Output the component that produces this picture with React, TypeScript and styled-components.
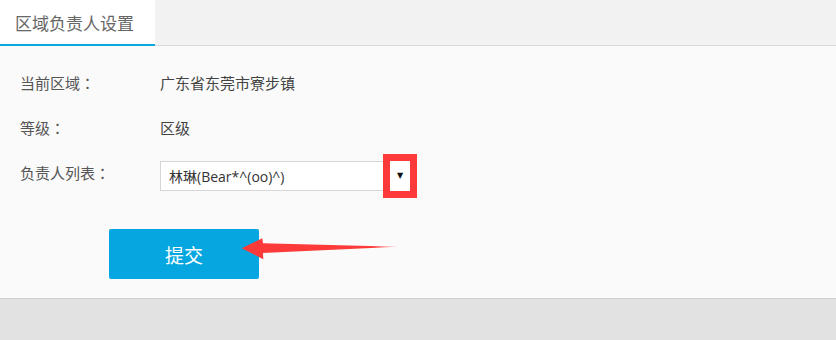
import React from 'react';
import styled, { createGlobalStyle } from 'styled-components';

const GlobalStyle = createGlobalStyle`
  html, body {
    margin: 0;
    padding: 0;
    background: #e2e2e2;
    font-family: 'Noto Sans CJK SC', 'Open Sans', sans-serif;
  }
`;

const Panel = styled.div`
  position: relative;
  background: #fafafa;
  border-bottom: 1px solid #cfcfcf;
  box-shadow: 0 2px 5px rgba(0, 0, 0, 0.25);
`;

const TabBar = styled.div`
  display: flex;
  align-items: flex-start;
  height: 45px;
  background: #f2f2f2;
  border-bottom: 1px solid #d8d8d8;
`;

const Tab = styled.div<{ active?: boolean }>`
  box-sizing: border-box;
  width: 155px;
  height: 46px;
  margin-bottom: -1px;
  padding-left: 15px;
  display: flex;
  align-items: center;
  font-size: 17px;
  color: #666;
  background: ${({ active }) => (active ? '#fff' : 'transparent')};
  border-bottom: 2px solid ${({ active }) => (active ? '#0aa6de' : 'transparent')};
`;

const Form = styled.div`
  padding: 14px 0 19px 20px;
`;

const Row = styled.div`
  display: flex;
  align-items: center;
  height: 45px;
  font-size: 15px;
`;

const Label = styled.div`
  width: 140px;
  color: #555;
`;

const Colon = styled.span`
  font-family: 'Noto Sans CJK TC', sans-serif;
`;

const Value = styled.div`
  color: #444;
`;

const Select = styled.div`
  box-sizing: border-box;
  display: flex;
  align-items: center;
  width: 250px;
  height: 30px;
  margin-top: 6px;
  border: 1px solid #d6d6d6;
  background: #fff;
`;

const SelectText = styled.div`
  flex: 1;
  padding-left: 8px;
  font-family: 'Open Sans', 'Noto Sans CJK SC', sans-serif;
  font-size: 14px;
  color: #333;
`;

const SelectArrow = styled.div`
  width: 20px;
  height: 30px;
  margin-right: -1px;
  display: flex;
  align-items: center;
  justify-content: center;
  font-family: 'DejaVu Sans', sans-serif;
  font-size: 8px;
  color: #111;
  background: #fff;
  outline: 7px solid #fd3a3a;
`;

const ButtonRow = styled.div`
  position: relative;
  margin-top: 34px;
  padding-left: 89px;
`;

const SubmitButton = styled.button`
  width: 150px;
  height: 50px;
  border: none;
  border-radius: 2px;
  background: #06a7e0;
  color: #fff;
  font-family: 'Noto Sans CJK SC', sans-serif;
  font-size: 19px;
  cursor: pointer;
`;

const Pointer = styled.svg`
  position: absolute;
  left: 221px;
  top: 7px;
`;

const FieldLabel: React.FC<{ text: string }> = ({ text }) => (
  <Label>
    {text}
    <Colon>：</Colon>
  </Label>
);

export default function App(): JSX.Element {
  return (
    <>
      <GlobalStyle />
      <Panel>
        <TabBar>
          <Tab active>区域负责人设置</Tab>
        </TabBar>
        <Form>
          <Row>
            <FieldLabel text='当前区域' />
            <Value>广东省东莞市寮步镇</Value>
          </Row>
          <Row>
            <FieldLabel text='等级' />
            <Value>区级</Value>
          </Row>
          <Row>
            <FieldLabel text='负责人列表' />
            <Select>
              <SelectText>林琳(Bear*^(oo)^)</SelectText>
              <SelectArrow>▼</SelectArrow>
            </Select>
          </Row>
          <ButtonRow>
            <SubmitButton type='button'>提交</SubmitButton>
            <Pointer width='162' height='26' viewBox='0 0 162 26'>
              <defs>
                <linearGradient id='fade' x1='0' x2='1' y1='0' y2='0'>
                  <stop offset='0.85' stopColor='#fd3a3a' stopOpacity='1' />
                  <stop offset='1' stopColor='#fd3a3a' stopOpacity='0.3' />
                </linearGradient>
              </defs>
              <polygon
                points='0.7,12.3 21.3,2.3 22,7.3 157,10.7 22,17 22.3,23.3'
                fill='url(#fade)'
              />
            </Pointer>
          </ButtonRow>
        </Form>
      </Panel>
    </>
  );
}
